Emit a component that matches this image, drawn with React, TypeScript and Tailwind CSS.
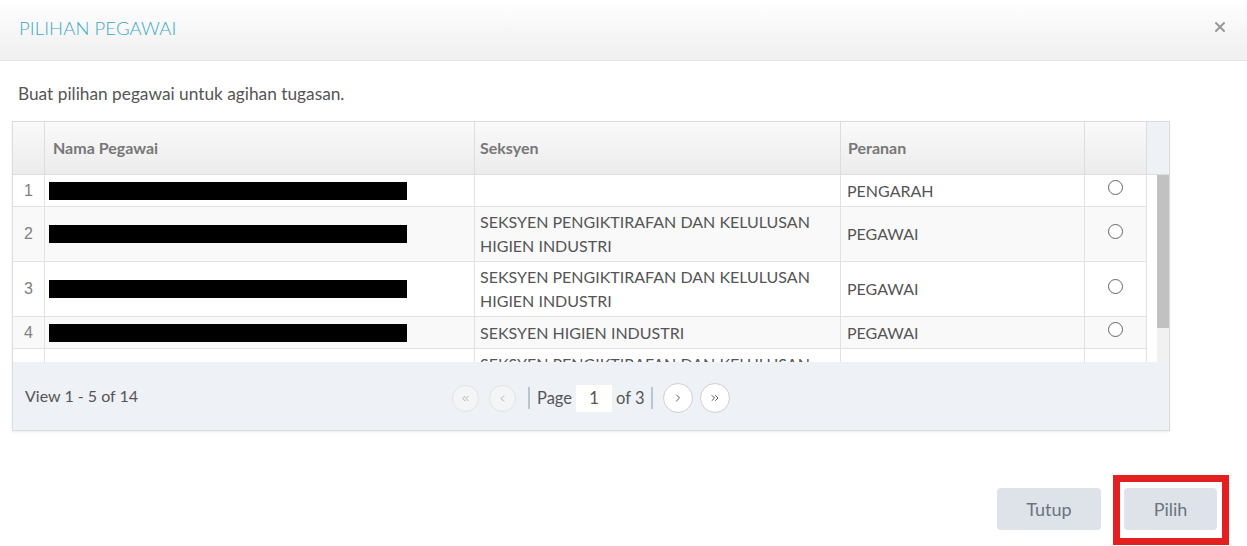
import { ChevronLeft, ChevronRight, ChevronsLeft, ChevronsRight, X } from 'lucide-react';

type Row = {
  no: number;
  seksyen: string[];
  peranan: string;
};

const rows: Row[] = [
  { no: 1, seksyen: [], peranan: 'PENGARAH' },
  { no: 2, seksyen: ['SEKSYEN PENGIKTIRAFAN DAN KELULUSAN', 'HIGIEN INDUSTRI'], peranan: 'PEGAWAI' },
  { no: 3, seksyen: ['SEKSYEN PENGIKTIRAFAN DAN KELULUSAN', 'HIGIEN INDUSTRI'], peranan: 'PEGAWAI' },
  { no: 4, seksyen: ['SEKSYEN HIGIEN INDUSTRI'], peranan: 'PEGAWAI' },
  { no: 5, seksyen: ['SEKSYEN PENGIKTIRAFAN DAN KELULUSAN', 'HIGIEN INDUSTRI'], peranan: 'PEGAWAI' },
];

const cols = 'grid grid-cols-[32px_430px_366px_244px_62px]';

export default function App() {
  return (
    <div className="relative h-[546px] w-[1247px] overflow-hidden bg-white font-['Lato','Open_Sans',sans-serif] text-[#555]">
      {/* Modal header */}
      <div className="flex h-[61px] items-center justify-between border-b border-[#e5e5e5] bg-gradient-to-b from-white to-[#efefef] pl-[19px] pr-[19px]">
        <h2 className="-mt-[3px] text-[18.5px] font-light tracking-[0.1px] text-[#3ea8c8]">PILIHAN PEGAWAI</h2>
        <X className="h-[16px] w-[16px] text-[#999] -mt-[6px]" strokeWidth={3} />
      </div>

      {/* Modal body */}
      <div className="px-[12px] pt-[21px]">
        <p className="pl-[6px] text-[17.3px] leading-[24px] text-[#555]">Buat pilihan pegawai untuk agihan tugasan.</p>

        <div className="mt-[15px] w-[1158px] border border-[#dcdcdc] shadow-[0_1px_2px_rgba(0,0,0,0.08)]">
          {/* header */}
          <div className="flex h-[53px] border-b border-[#dddddd]">
            <div className={`${cols} bg-gradient-to-b from-[#fafafa] to-[#ececec]`}>
              <div className="border-r border-[#dddddd]" />
              <div className="flex items-center border-r border-[#dddddd] pl-[8px] text-[16px] font-bold text-[#777]">Nama Pegawai</div>
              <div className="flex items-center border-r border-[#dddddd] pl-[5px] text-[16px] font-bold text-[#777]">Seksyen</div>
              <div className="flex items-center border-r border-[#dddddd] pl-[7px] text-[16px] font-bold text-[#777]">Peranan</div>
              <div className="border-r border-[#dddddd]" />
            </div>
            <div className="flex-1 bg-[#eef1f6]" />
          </div>

          {/* body */}
          <div className="flex h-[187px] overflow-hidden">
            <div className="w-[1134px]">
              {rows.map((r, i) => (
                <div
                  key={r.no}
                  className={`${cols} min-h-[32px] border-b border-[#e2e2e2] ${i % 2 === 1 ? 'bg-[#f9f9f9]' : 'bg-white'}`}
                >
                  <div className="flex items-center justify-center border-r border-[#e2e2e2] font-['Liberation_Sans',Arial,sans-serif] text-[16px] text-[#808080]">
                    {r.no < 5 ? r.no : ''}
                  </div>
                  <div className="flex items-center border-r border-[#e2e2e2] pl-[4px]">
                    {r.no < 5 && <div className="h-[18px] w-[358px] bg-black" />}
                  </div>
                  <div className="flex flex-col justify-center border-r border-[#e2e2e2] pl-[5px] pt-[3px] pb-[3px] text-[16px] leading-[24px] text-[#555]">
                    {r.seksyen.length === 0 ? <span>&nbsp;</span> : r.seksyen.map((s) => <span key={s}>{s}</span>)}
                  </div>
                  <div className="flex items-center border-r border-[#e2e2e2] pl-[6px] text-[16px] text-[#555]">
                    {r.no < 5 ? r.peranan : ''}
                  </div>
                  <div className="flex items-center justify-center border-r border-[#e2e2e2]">
                    {r.no < 5 && <div className="mb-[6px] h-[15px] w-[15px] rounded-full border-[1.5px] border-[#666] bg-white" />}
                  </div>
                </div>
              ))}
            </div>
            <div className="w-[10px] bg-white" />
            <div className="flex w-[12px] flex-col bg-[#f1f1f1]">
              <div className="h-[153px] bg-[#c1c1c1]" />
            </div>
          </div>

          {/* pager */}
          <div className="relative flex h-[68px] items-center bg-[#eef1f6] pl-[12px]">
            <span className="text-[16px] text-[#555]">View 1 - 5 of 14</span>
            <div className="absolute left-[439px] top-[21px] flex items-center text-[16.5px] text-[#555]">
              <button className="flex h-[27px] w-[27px] items-center justify-center rounded-full border border-[#e2e2e2] bg-[#f4f5f7] text-[#aaa]">
                <ChevronsLeft className="h-[11px] w-[11px]" strokeWidth={2} />
              </button>
              <button className="ml-[10px] flex h-[27px] w-[27px] items-center justify-center rounded-full border border-[#e2e2e2] bg-[#f4f5f7] text-[#aaa]">
                <ChevronLeft className="h-[11px] w-[11px]" strokeWidth={2} />
              </button>
              <div className="ml-[12px] h-[22px] w-[2px] bg-[#b9c5d2]" />
              <span className="ml-[7px]">Page</span>
              <div className="ml-[4px] flex h-[27px] w-[36px] items-center justify-center bg-white">1</div>
              <span className="ml-[4px]">of 3</span>
              <div className="ml-[7px] h-[22px] w-[2px] bg-[#b9c5d2]" />
              <button className="ml-[10px] flex h-[30px] w-[30px] items-center justify-center rounded-full border border-[#cfcfcf] bg-white text-[#555]">
                <ChevronRight className="h-[12px] w-[12px]" strokeWidth={2} />
              </button>
              <button className="ml-[7px] flex h-[30px] w-[30px] items-center justify-center rounded-full border border-[#cfcfcf] bg-white text-[#555]">
                <ChevronsRight className="h-[12px] w-[12px]" strokeWidth={2} />
              </button>
            </div>
          </div>
        </div>
      </div>

      {/* footer buttons */}
      <div className="mt-[57px] flex justify-end gap-[23px] pr-[30px]">
        <button className="h-[42px] w-[104px] rounded-[4px] bg-[#dee3ea] text-[18px] text-[#6b7480]">Tutup</button>
        <button className="h-[42px] w-[93px] rounded-[4px] bg-[#dee3ea] text-[18px] text-[#6b7480]">Pilih</button>
      </div>

      {/* annotation box */}
      <div className="absolute left-[1113px] top-[475px] h-[70px] w-[116px] border-[7px] border-[#e3201f]" />
    </div>
  );
}
